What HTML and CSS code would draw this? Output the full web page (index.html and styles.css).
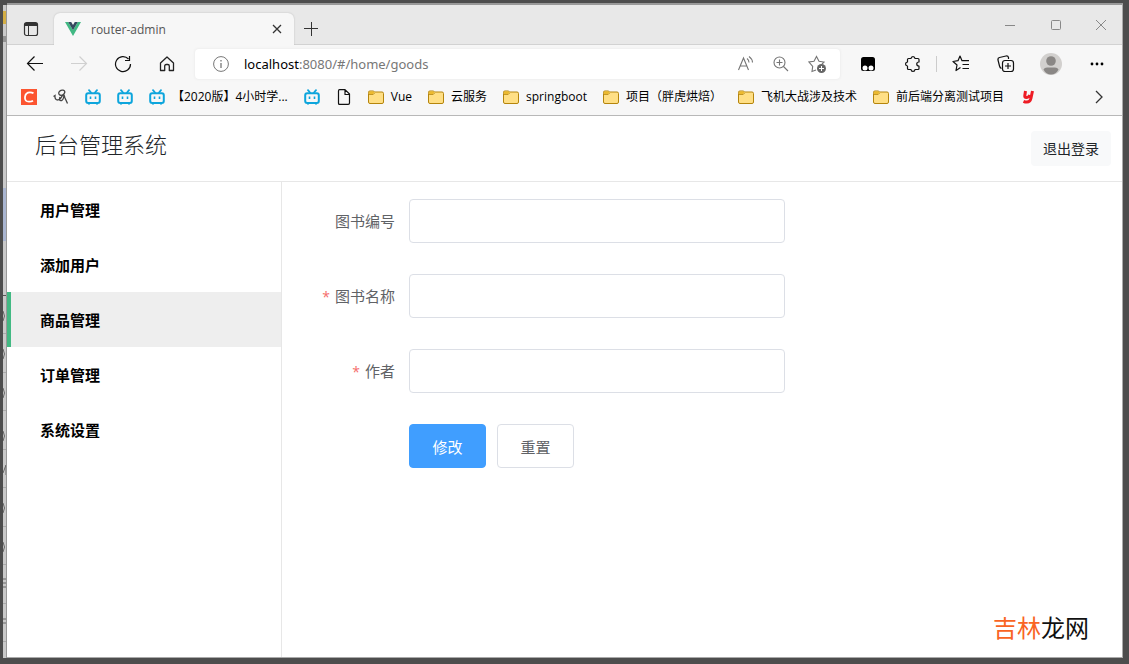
FILE: index.html
```html
<!DOCTYPE html>
<html lang="zh-CN">
<head>
<meta charset="utf-8">
<title>router-admin</title>
<link rel="stylesheet" href="styles.css">
</head>
<body>
<svg class="defs" aria-hidden="true">
  <symbol id="folder" viewBox="0 0 16 16">
    <path d="M.5 4.500v-1A1.400 1.400 0 0 1 2 2h3.200l1.600 1H14a1.500 1.500 0 0 1 1.500 1.500v8.500a1.500 1.500 0 0 1-1.500 1.500H2A1.500 1.500 0 0 1 .5 13z" fill="#ffdf85" stroke="#b5850c"/>
    <path d="M1 5V3.500Q1 2.500 2 2.500h3l1.500 1L5 5z" fill="#ecb92e"/>
    <path d="M1 5.500h4.200l1.500-1.500" fill="none" stroke="#b5850c" stroke-width=".8"/>
  </symbol>
  <symbol id="tv" viewBox="0 0 16 16">
    <path d="M4 1.200l2 2.300M12 1.200l-2 2.300" fill="none" stroke="#0da5dc" stroke-width="1.800" stroke-linecap="round"/>
    <rect x="1.200" y="4.200" width="13.600" height="9.800" rx="2" fill="#f7f7f7" stroke="#0da5dc" stroke-width="2"/>
    <path d="M5.500 7.500v2.500M10.500 7.500v2.500" stroke="#0da5dc" stroke-width="1.600"/>
    <path d="M4 14.500v1M12 14.500v1" stroke="#0da5dc" stroke-width="2"/>
  </symbol>
</svg>
<div class="window">
  <svg class="edge" width="4" height="653" viewBox="0 0 4 653" aria-hidden="true">
    <path fill="#c9c9c9" d="M0 0h4v653H0z"/>
    <path fill="#d3ae45" d="M0 6h4v13H0z"/>
    <path fill="#929292" d="M0 31h4v6H0z"/>
    <path fill="#a9b5d0" d="M0 183h4v53H0z"/>
    <path stroke="#555" d="M0 290.500h4"/>
    <path stroke="#aaa" d="M0 328.500h4M0 367.500h4M0 405.500h4M0 444.500h4M0 482.500h4M0 521.500h4M0 559.500h4M0 598.500h4M0 636.500h4"/>
    <path stroke="#666" fill="none" d="M0 306q3 5 0 10M0 344q3 5 0 10M0 383q3 5 0 10M0 426q3 5 0 10M0 468l3-8v10M0 498q3 5 0 10M0 537q3 5 0 10M0 574h4M0 578h4M0 582h4M0 614h4M0 618h4"/>
    <path stroke="#999" d="M3.500 0v653"/>
  </svg>
  <div class="browser">
    <div class="tabs">
      <button class="icon tab-menu" aria-label="标签页操作"><svg width="16" height="16" viewBox="0 0 16 16"><rect x="1.500" y="1.500" width="13" height="13" rx="2" fill="none" stroke="#333" stroke-width="1.200"/><path d="M2 2h12v3H2z" fill="#333"/><path d="M5.500 5v9" stroke="#333"/></svg></button>
      <div class="tab">
        <svg width="16" height="14" viewBox="0 0 16 14"><path d="M0 0h3.200L8 8.300 12.800 0H16L8 13.900z" fill="#41b883"/><path d="M3.200 0h3L8 3l1.800-3h3L8 8.300z" fill="#35495e"/></svg>
        <span class="tab-title">router-admin</span>
        <button class="icon close" aria-label="关闭标签页"><svg width="10" height="10" viewBox="0 0 10 10"><path d="M1 1l8 8M9 1L1 9" stroke="#333" stroke-width="1.300"/></svg></button>
      </div>
      <button class="icon plus" aria-label="新建标签页"><svg width="14" height="14" viewBox="0 0 14 14"><path d="M7.500 0v14M0 6.500h14" stroke="#333"/></svg></button>
      <div class="controls">
        <button class="icon" aria-label="最小化"><svg width="12" height="12" viewBox="0 0 12 12"><path d="M1 6.500h10" stroke="#888"/></svg></button>
        <button class="icon" aria-label="最大化"><svg width="12" height="12" viewBox="0 0 12 12"><rect x="1.500" y="1.500" width="9" height="9" rx="1" fill="none" stroke="#888"/></svg></button>
        <button class="icon" aria-label="关闭"><svg width="12" height="12" viewBox="0 0 12 12"><path d="M1 1l10 10M11 1L1 11" stroke="#888"/></svg></button>
      </div>
    </div>
    <div class="toolbar">
      <div class="nav">
        <button class="icon" aria-label="后退"><svg width="18" height="18" viewBox="0 0 18 18" fill="none" stroke="#111" stroke-width="1.200"><path d="M17 8.500H1.500M8.500 1.500l-7 7 7 7"/></svg></button>
        <button class="icon" aria-label="前进" disabled><svg width="18" height="18" viewBox="0 0 18 18" fill="none" stroke="#d0d0d0" stroke-width="1.200"><path d="M1 8.500h15.500M9.500 1.500l7 7-7 7"/></svg></button>
        <button class="icon" aria-label="刷新"><svg width="18" height="18" viewBox="0 0 18 18" fill="none" stroke="#111" stroke-width="1.200"><path d="M16.500 9A7.500 7.500 0 1 1 14.500 4M15.500 1v4.500H11"/></svg></button>
        <button class="icon" aria-label="主页"><svg width="18" height="18" viewBox="0 0 18 18" fill="none" stroke="#222" stroke-width="1.300" stroke-linejoin="round"><path d="M2.500 8L9 2l6.500 6v7.500h-4.200V11q0-1.500-1.500-1.500H8.200q-1.500 0-1.500 1.500v4.500H2.500z"/></svg></button>
      </div>
      <div class="address">
        <svg width="16" height="16" viewBox="0 0 16 16" fill="none" stroke="#777"><circle cx="8" cy="8" r="7.400"/><path d="M8 7v5M8 4v1.500" stroke-width="1.300"/></svg>
        <div class="url"><b>localhost</b>:8080/#/home/goods</div>
        <button class="icon" aria-label="朗读"><svg width="18" height="18" viewBox="0 0 18 18" fill="none" stroke="#757575" stroke-width="1.100"><path d="M2.500 15L7.500 3l5 12M4.300 11h6.500M11 3.500q2 1.500 2 4M13 1.500q3.500 2.500 3.500 6"/></svg></button>
        <button class="icon" aria-label="缩放"><svg width="16" height="16" viewBox="0 0 16 16" fill="none" stroke="#757575" stroke-width="1.100"><circle cx="6.500" cy="6.500" r="5.500"/><path d="M10.500 10.500l4.500 4.500M6.500 3.500v6M3.500 6.500h6"/></svg></button>
        <button class="icon" aria-label="收藏"><svg width="18" height="18" viewBox="0 0 18 18"><path d="M8 15l-4 1.500.7-5L1 7l5-.8L8.500 1.500 11 6.200l5 .8-2 2" fill="none" stroke="#757575" stroke-width="1.100"/><circle cx="13.500" cy="13.500" r="4.500" fill="#666"/><path d="M13.500 11v5M11 13.500h5" stroke="#fff"/></svg></button>
      </div>
      <div class="tools">
        <button class="icon" aria-label="扩展程序"><svg width="16" height="16" viewBox="0 0 16 16"><rect x="1" y="1" width="14" height="14" rx="2.500" fill="#000"/><circle cx="5" cy="12" r="2.500" fill="#fff"/><circle cx="11" cy="12" r="2.500" fill="#fff"/></svg></button>
        <button class="icon" aria-label="扩展"><svg width="18" height="18" viewBox="0 0 18 18" fill="none" stroke="#111" stroke-width="1.200" stroke-linejoin="round"><path d="M4.500 3.500H7c.2-2.600 3.800-2.600 4 0h3q1 0 1 1V7c-3 0-3 4 0 4v2.500q0 1-1 1h-3c-.2 2.600-3.800 2.600-4 0H4.500q-1 0-1-1V11c-2.600-.2-2.600-3.800 0-4V4.500q0-1 1-1z"/></svg></button>
        <span class="rule"></span>
        <button class="icon" aria-label="收藏夹"><svg width="18" height="18" viewBox="0 0 18 18" fill="none" stroke="#111" stroke-width="1.200" stroke-linejoin="round"><path d="M8.500 12.500l-4.500 3 1-5.500L1 6.500l5-.8L8 1l2 4.700h7M10.500 9.500H17M10.500 13.500H17"/></svg></button>
        <button class="icon" aria-label="集锦"><svg width="18" height="18" viewBox="0 0 18 18" fill="none" stroke="#111" stroke-width="1.200"><path d="M4.500 13.500Q3 13 2.500 11L1 5q-.4-2 1.500-2.500L9 1q2-.4 2.500 1.500V4"/><rect x="5.500" y="5.500" width="11" height="11" rx="2.500"/><path d="M11 8v6M8 11h6"/></svg></button>
        <button class="icon avatar" aria-label="用户"><svg width="22" height="22" viewBox="0 0 22 22"><circle cx="11" cy="11" r="11" fill="#d2d0ce"/><circle cx="11" cy="8" r="4.800" fill="#8a8785"/><path d="M3.500 16.500q1-2 3.500-2h8q2.500 0 3.500 2Q16 21.500 11 21.500T3.500 16.500z" fill="#8a8785"/></svg></button>
        <button class="icon" aria-label="更多"><svg width="16" height="4" viewBox="0 0 16 4"><circle cx="4" cy="2" r="1.400"/><circle cx="9" cy="2" r="1.400"/><circle cx="14" cy="2" r="1.400"/></svg></button>
      </div>
    </div>
    <nav class="bookmarks" aria-label="书签">
      <a href="#" aria-label="C"><svg viewBox="0 0 16 16"><path fill="#fc5531" d="M0 0h16v16H0z"/><path d="M12.500 4.300Q11 3.300 9 3.300 4.500 3.300 4 8t4 4.700q2.500 0 4-1" fill="none" stroke="#fff" stroke-width="1.800"/></svg></a>
      <a href="#" aria-label="网站"><svg viewBox="0 0 16 16" fill="none" stroke="#444" stroke-width="1.300"><path d="M.5 7.500L2 6.500Q1.500 11 5 11q3-1 4.500-4.500M8.500 6.500Q5 6 6 3q1.500-2.500 4-1.800Q12.500 2 11.500 4 11 6 8.500 6.500M7 8q-1.500 4 1.500 3.500Q10.500 11 11 6l1 3 2.500 5.500"/></svg></a>
      <a href="#" aria-label="视频"><svg><use href="#tv"/></svg></a>
      <a href="#" aria-label="视频"><svg><use href="#tv"/></svg></a>
      <a href="#"><svg><use href="#tv"/></svg>【2020版】4小时学...</a>
      <a href="#" aria-label="视频"><svg><use href="#tv"/></svg></a>
      <a href="#" aria-label="页面"><svg viewBox="0 0 16 16" fill="none" stroke="#111" stroke-width="1.200" stroke-linejoin="round"><path d="M3.500.6h5.500L13.500 5v9q0 1.400-1.400 1.400H3.500Q2.500 15.400 2.500 14V2Q2.500.6 3.500.6zM9 1v4.500h4.500"/></svg></a>
      <a href="#"><svg><use href="#folder"/></svg>Vue</a>
      <a href="#"><svg><use href="#folder"/></svg>云服务</a>
      <a href="#"><svg><use href="#folder"/></svg>springboot</a>
      <a href="#"><svg><use href="#folder"/></svg>项目（胖虎烘焙）</a>
      <a href="#"><svg><use href="#folder"/></svg>飞机大战涉及技术</a>
      <a href="#"><svg><use href="#folder"/></svg>前后端分离测试项目</a>
      <a href="#" aria-label="有道"><svg viewBox="0 0 16 16" fill="none" stroke="#ee1c25" stroke-width="3"><path d="M5.500 2L4.800 6.500q-.3 2 1.500 2 2.600 0 3.500-2.500M12.500 2l-1.600 7.500q-.8 3.500-3.900 3.500-2 0-3.500-.7"/></svg></a>
      <button class="icon more" aria-label="更多书签"><svg width="10" height="14" viewBox="0 0 10 14"><path d="M2 1l6 6-6 6" fill="none" stroke="#333" stroke-width="1.300"/></svg></button>
    </nav>
    <div class="app">
      <header>
        <h1>后台管理系统</h1>
        <button class="logout">退出登录</button>
      </header>
      <div class="main">
        <nav class="menu" aria-label="菜单">
          <a href="#">用户管理</a>
          <a href="#">添加用户</a>
          <a href="#" class="active" aria-current="page">商品管理</a>
          <a href="#">订单管理</a>
          <a href="#">系统设置</a>
        </nav>
        <form>
          <label for="book-id">图书编号</label>
          <input id="book-id" type="text">
          <label for="book-name" class="required">图书名称</label>
          <input id="book-name" type="text" required>
          <label for="author" class="required">作者</label>
          <input id="author" type="text" required>
          <div class="actions">
            <button type="button" class="btn primary">修改</button>
            <button type="reset" class="btn">重置</button>
          </div>
        </form>
      </div>
      <div class="watermark"><span>吉林</span>龙网</div>
    </div>
  </div>
</div>
</body>
</html>
```

FILE: styles.css
```css
* { box-sizing: border-box; }

body {
  margin: 0;
  font-family: "Open Sans", "Noto Sans CJK SC", sans-serif;
  background: #4d4d4d;
}

button, input { font: inherit; }
a { color: inherit; text-decoration: none; }
svg { display: block; flex: none; }
.defs { position: absolute; width: 0; height: 0; }

.window {
  display: flex;
  min-height: 100vh;
  border: solid #4d4d4d;
  border-width: 3px 6px 6px 3px;
}

.edge { margin-top: 2px; }

.browser {
  flex: 1;
  min-width: 0;
  display: flex;
  flex-direction: column;
  border-top: 2px solid #999;
  border-right: 1px solid #aaa;
  border-bottom: 1px solid #aaa;
  background: #fff;
}

.icon {
  display: flex;
  align-items: center;
  justify-content: center;
  flex: none;
  padding: 0;
  border: 0;
  background: none;
}

/* Tab strip */
.tabs {
  display: flex;
  align-items: flex-end;
  height: 40px;
  background: #e8e8e8;
  box-shadow: inset 0 -1px #d2d2d2;
}

.tab-menu { width: 47px; height: 32px; }

.tab {
  display: flex;
  align-items: center;
  gap: 10px;
  width: 240px;
  height: 32px;
  padding: 0 12px 0 11px;
  border-radius: 6px 6px 0 0;
  background: #f7f7f7;
  box-shadow: 0 0 2px #bbb;
  clip-path: inset(-2px -2px 0 -2px);
}

.tab-title { flex: 1; font-size: 12px; color: #555; }
.plus { width: 34px; height: 32px; }

.controls {
  display: flex;
  align-self: stretch;
  margin-left: auto;
}

.controls .icon { width: 46px; }
.controls .icon:last-child { width: 43px; }

/* Toolbar */
.toolbar {
  display: flex;
  align-items: center;
  height: 38px;
  background: #f7f7f7;
}

.nav { display: flex; padding: 0 6px; }
.nav .icon { width: 44px; height: 30px; }

.address {
  flex: 1;
  display: flex;
  align-items: center;
  height: 30px;
  padding: 0 5px 0 18px;
  border-radius: 4px;
  background: #fff;
  box-shadow: 0 0 3px #e4e4e4;
}

.address .icon { width: 36px; height: 30px; }
.url { flex: 1; padding-left: 15px; font-family: "Noto Sans", sans-serif; font-size: 13px; color: #777; }
.url b { font-weight: 400; color: #000; }

.tools {
  display: flex;
  align-items: center;
  padding: 0 4px 0 5px;
}

.tools .icon { width: 45px; height: 30px; }
.rule { width: 1px; height: 16px; margin: 0 1px; background: #ccc; }

/* Bookmarks */
.bookmarks {
  display: flex;
  align-items: center;
  gap: 16px;
  height: 33px;
  padding: 0 18px 4px 14px;
  border-bottom: 1px solid #b8b8b8;
  background: #f7f7f7;
  font-size: 12px;
  line-height: 18px;
  white-space: nowrap;
}

.bookmarks a { display: flex; align-items: center; gap: 7px; }
.bookmarks a svg { width: 16px; height: 16px; }
.more { margin-left: auto; }

/* Application */
.app {
  position: relative;
  flex: 1;
  display: flex;
  flex-direction: column;
}

header {
  display: flex;
  align-items: center;
  justify-content: space-between;
  padding: 15px 11px 15px 28px;
  border-bottom: 1px solid #e7e7e7;
}

h1 {
  margin: 0;
  padding-bottom: 10px;
  font-size: 22px;
  font-weight: 300;
  line-height: 24px;
  color: #212529;
}

.logout {
  padding: 7px 12px;
  border: 0;
  border-radius: 4px;
  background: #f8f9fa;
  font-size: 14px;
  line-height: 21px;
  color: #212529;
}

.main { flex: 1; display: flex; }

.menu {
  flex: none;
  width: 275px;
  border-right: 1px solid #e7e7e7;
  font-size: 15px;
  font-weight: 700;
  line-height: 53px;
  color: #000;
}

.menu a { display: block; padding: 2px 0 0 33px; }

.menu .active {
  padding-left: 29px;
  border-left: 4px solid #42b983;
  background: #eee;
}

form {
  flex: 1;
  display: grid;
  grid-template-columns: 113px minmax(0, 376px);
  align-content: start;
  gap: 31px 14px;
  padding: 17px 0;
  font-size: 15px;
  line-height: 44px;
  color: #606266;
}

label { text-align: right; }
.required::before { content: "*"; margin-right: 5px; font-size: 14px; line-height: 1; color: #f56c6c; }

input {
  width: 100%;
  height: 44px;
  padding: 0 16px;
  border: 1px solid #dcdfe6;
  border-radius: 4px;
  background: #fff;
  color: #606266;
}

.actions { grid-column: 2; display: flex; gap: 11px; }

.btn {
  width: 77px;
  height: 44px;
  padding: 0;
  border: 1px solid #dcdfe6;
  border-radius: 4px;
  background: #fff;
  color: #606266;
}

.primary { border-color: #409eff; background: #409eff; color: #fff; }

.watermark {
  position: absolute;
  right: 33px;
  bottom: 12px;
  font-size: 24px;
  line-height: 34px;
  color: #111;
}

.watermark span { color: #f96424; }
```
